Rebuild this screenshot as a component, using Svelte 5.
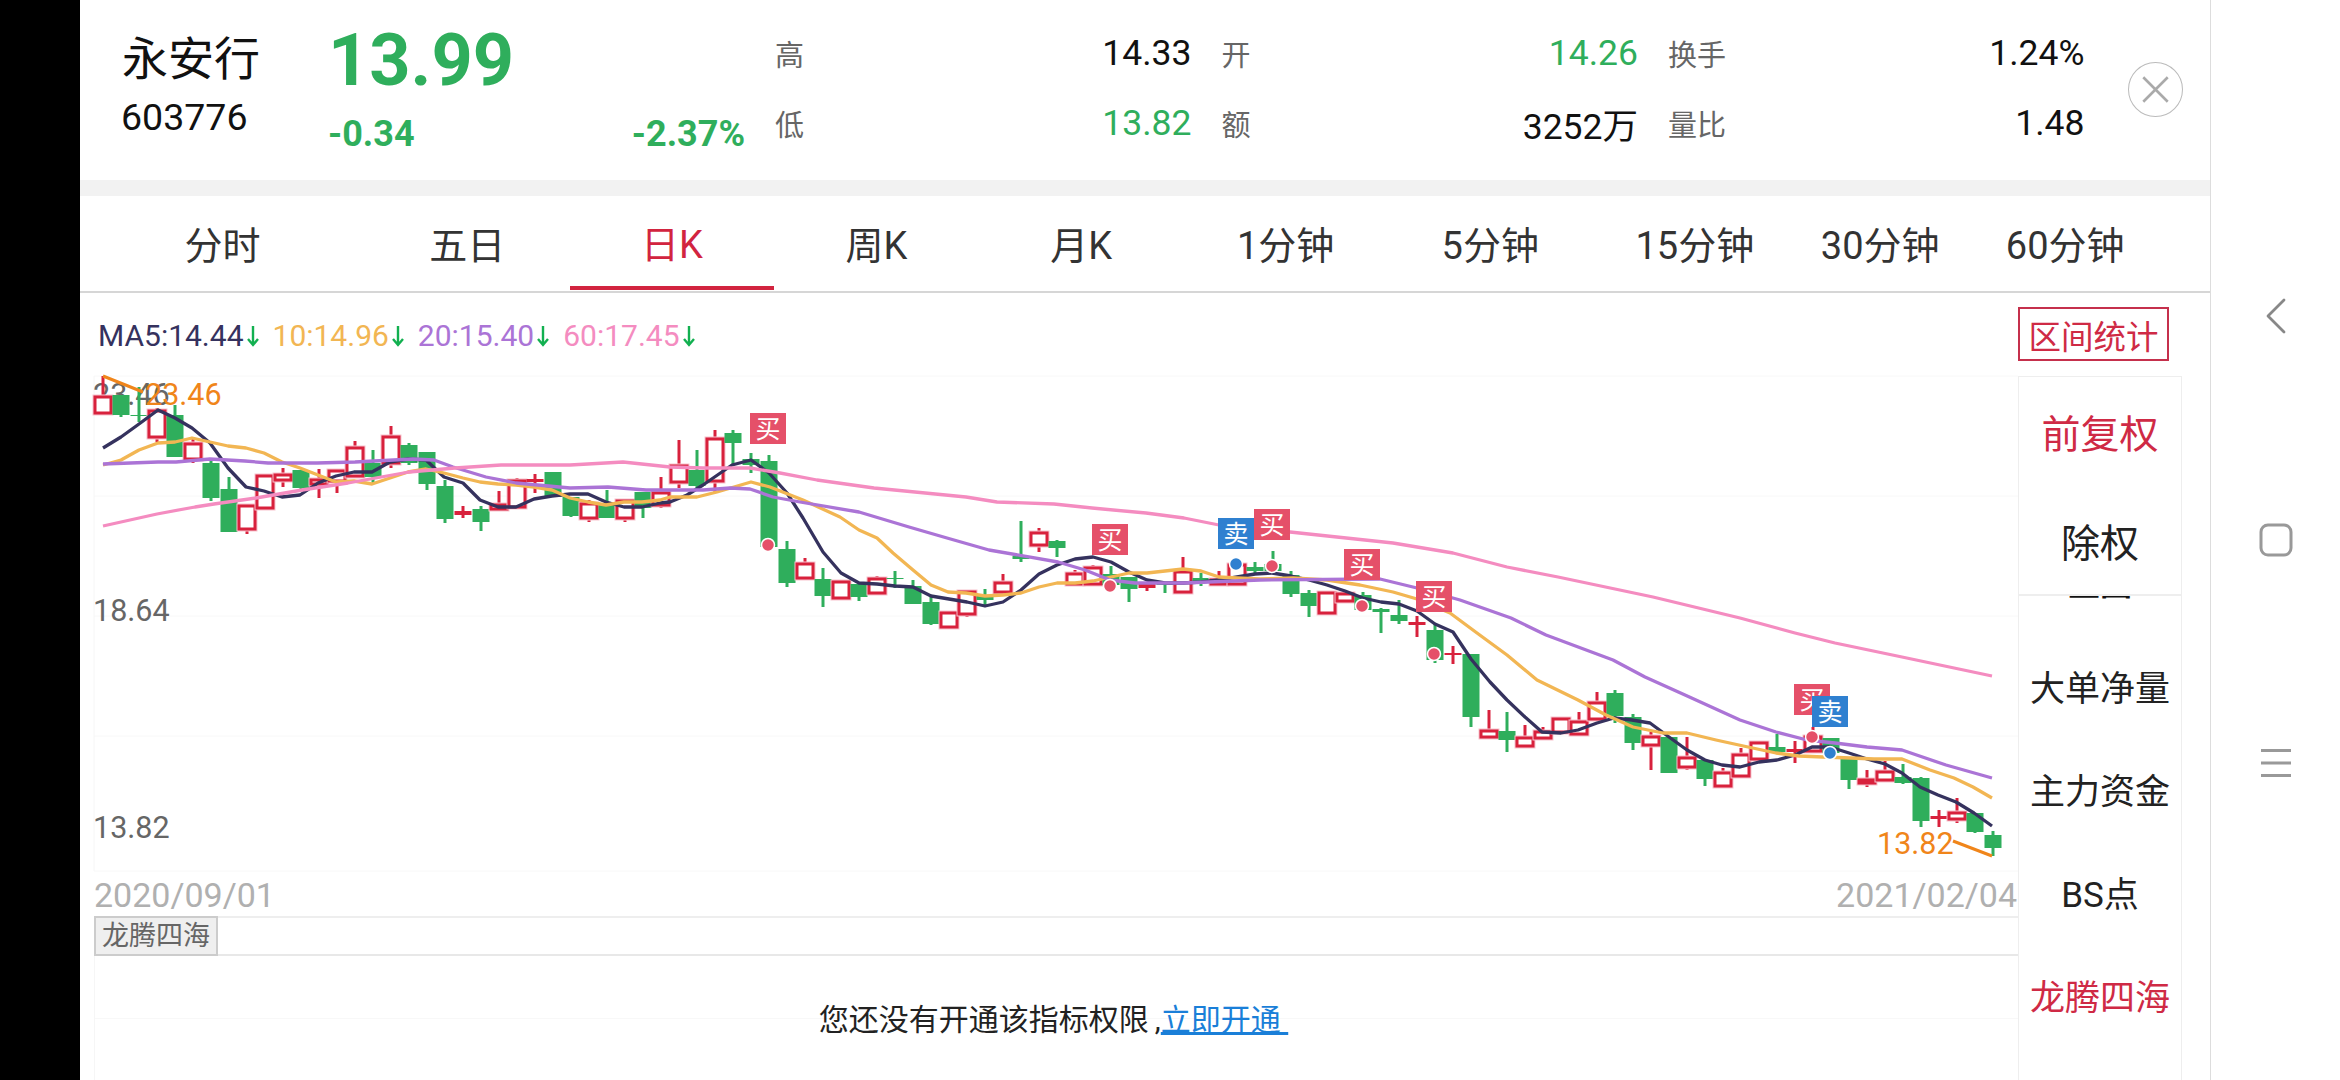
<script>
  const red = "#d8213c";
  const green = "#2fae5c";

  // type, body top, body bottom, high, low (page y of each day)
  const days = [
    ["r",397,413,376,413],["g",395,415,395,417],["g",415,416,387,422],["r",411,437,408,442],["g",415,457,405,457],
    ["r",444,459,437,463],["g",463,498,458,501],["g",489,532,477,532],["r",506,529,506,534],["r",476,508,474,508],
    ["r",475,480,468,487],["g",470,488,470,491],["r",480,484,469,498],["r",471,481,471,493],["r",448,476,441,476],
    ["g",463,477,450,483],["r",437,463,426,468],["g",445,463,443,465],["g",452,484,452,490],["g",486,519,480,523],
    ["s",511,515,506,518],["g",509,522,506,531],["r",505,509,491,510],["r",481,507,478,507],["s",479,482,474,493],
    ["g",472,497,472,497],["g",497,516,497,517],["r",504,518,500,522],["g",503,518,490,518],["r",501,518,499,522],
    ["g",492,508,492,518],["r",493,505,477,508],["r",466,482,440,488],["g",470,486,450,488],["r",439,481,430,492],
    ["g",433,443,430,465],["g",459,465,453,473],["g",461,547,455,547],["g",549,583,541,587],["r",564,578,558,578],
    ["g",579,596,568,607],["r",582,598,582,599],["g",584,597,584,601],["r",579,593,576,595],["g",578,579,571,588],
    ["g",586,604,580,604],["g",602,624,597,625],["r",613,627,613,627],["r",592,614,592,617],["g",596,600,589,607],
    ["r",583,592,574,595],["g",556,559,521,562],["r",533,545,528,552],["g",541,548,540,557],["r",574,584,570,584],
    ["r",568,584,565,585],["g",574,585,566,585],["g",577,589,577,602],["s",584,588,584,591],["g",582,585,582,593],
    ["r",572,592,557,592],["g",578,581,573,586],["r",580,584,571,585],["r",565,584,563,584],["g",567,571,562,575],
    ["g",564,571,551,571],["g",575,594,571,597],["g",593,606,590,617],["r",593,613,593,613],["r",594,601,594,603],
    ["g",595,610,592,610],["g",609,612,608,633],["g",615,621,600,624],["s",622,625,616,637],["g",630,660,624,663],
    ["s",653,655,646,664],["g",654,717,654,727],["r",731,737,710,737],["g",731,740,712,752],["r",738,746,725,746],
    ["r",732,738,727,740],["r",719,732,717,732],["r",722,734,712,734],["r",703,719,692,719],["g",693,716,690,723],
    ["g",717,743,714,750],["r",737,745,732,770],["g",737,773,737,773],["r",758,767,737,770],["g",760,779,760,786],
    ["r",773,786,768,787],["r",755,776,748,777],["r",743,759,741,759],["g",747,752,734,752],["s",749,752,741,763],
    ["r",737,751,727,751],["g",738,753,738,753],["g",758,780,758,789],["r",780,783,770,787],["r",772,780,761,782],
    ["g",777,783,764,784],["g",778,821,777,827],["s",816,819,810,827],["r",813,819,798,823],["g",813,832,813,833],
    ["g",835,848,831,856]
  ];

  const candles = days.map(([kind, top, bottom, high, low], i) => ({
    x: 103 + 18 * i, kind, top, bottom, high, low,
    color: kind === "g" ? green : red
  }));

  const ma5 = "103,448 121,437 139,424 158,410 175,418 192,428 210,443 228,468 246,487 264,491 282,497 300,495 318,483 336,476 354,472 372,472 390,462 408,459 426,460 444,477 463,483 480,500 498,507 516,507 534,499 552,496 570,494 588,494 606,502 624,507 642,507 660,503 670,502 687,495 703,485 732,465 751,460 769,473 787,493 803,518 823,552 841,573 859,583 877,584 895,586 913,587 931,596 949,599 967,602 985,606 1003,602 1021,590 1039,574 1057,565 1075,559 1093,557 1111,562 1129,572 1147,580 1165,583 1183,583 1201,582 1219,580 1237,577 1255,574 1272,573 1291,576 1309,580 1327,585 1345,591 1363,598 1381,602 1399,604 1417,611 1435,624 1453,632 1471,659 1490,682 1507,700 1525,717 1542,732 1561,733 1578,730 1597,723 1614,718 1632,720 1650,723 1669,737 1687,750 1705,760 1722,765 1740,767 1759,762 1777,760 1795,755 1812,747 1830,747 1849,753 1867,759 1885,764 1902,773 1920,787 1938,795 1956,802 1974,813 1992,826";
  const ma10 = "103,465 121,460 139,450 158,443 175,442 192,438 210,442 228,446 246,448 264,453 282,462 300,468 318,475 336,482 354,481 372,484 390,478 408,472 426,469 444,473 463,478 480,482 498,484 516,485 534,487 552,490 570,498 588,502 606,505 624,502 642,502 660,500 670,497 697,497 717,492 751,482 770,487 803,500 840,517 859,530 877,538 893,553 913,570 931,585 948,592 966,593 985,596 1003,595 1021,593 1039,587 1057,583 1075,583 1093,581 1111,577 1129,573 1147,573 1165,571 1183,569 1201,571 1219,577 1237,578 1260,579 1293,578 1327,580 1360,585 1393,592 1417,599 1450,613 1477,633 1507,655 1537,680 1578,700 1606,715 1633,727 1663,733 1687,733 1716,740 1748,747 1776,753 1799,756 1823,757 1851,758 1874,759 1902,759 1930,770 1954,778 1973,787 1992,798";
  const ma20 = "103,464 158,462 176,462 210,459 245,461 268,463 317,463 355,462 413,459 434,460 453,467 486,477 516,483 570,488 608,487 646,490 703,490 730,488 750,489 773,497 800,502 859,512 909,527 947,538 989,550 1058,562 1085,570 1110,580 1135,583 1183,583 1260,580 1380,579 1417,588 1460,600 1511,618 1546,635 1613,660 1645,677 1685,695 1740,720 1776,732 1807,740 1835,743 1867,747 1902,750 1946,765 1992,778";
  const ma60 = "103,526 157,514 195,507 214,504 256,498 302,490 348,483 409,472 455,468 501,465 570,465 623,462 670,467 703,468 750,468 780,473 817,480 874,488 966,497 997,502 1054,504 1092,508 1146,513 1184,518 1219,525 1290,532 1393,543 1453,553 1507,567 1558,577 1653,597 1740,618 1795,633 1835,643 1902,657 1992,676";

  const lines = [
    { points: ma5, color: "#35325e" },
    { points: ma10, color: "#f2b653" },
    { points: ma20, color: "#ab74d6" },
    { points: ma60, color: "#f48cc0" }
  ];

  const signals = [
    { x: 750, y: 413, text: "买" }, { x: 1092, y: 524, text: "买" }, { x: 1254, y: 509, text: "买" },
    { x: 1344, y: 549, text: "买" }, { x: 1416, y: 581, text: "买" }, { x: 1794, y: 684, text: "买" },
    { x: 1218, y: 518, text: "卖" }, { x: 1812, y: 696, text: "卖" }
  ];

  const dots = [
    { x: 768, y: 545, c: "#e55069" }, { x: 1110, y: 586, c: "#e55069" }, { x: 1272, y: 566, c: "#e55069" },
    { x: 1362, y: 606, c: "#e55069" }, { x: 1434, y: 654, c: "#e55069" }, { x: 1812, y: 737, c: "#e55069" },
    { x: 1236, y: 564, c: "#2f80d0" }, { x: 1830, y: 753, c: "#2f80d0" }
  ];

  const stats = [
    { label: "高", value: "14.33" },
    { label: "开", value: "14.26", up: true },
    { label: "换手", value: "1.24%" },
    { label: "低", value: "13.82", up: true },
    { label: "额", value: "3252万" },
    { label: "量比", value: "1.48" }
  ];

  const tabs = ["分时", "五日", "日K", "周K", "月K", "1分钟", "5分钟", "15分钟", "30分钟", "60分钟"];

  const legend = [
    { text: "MA5:14.44", color: "#35325e" },
    { text: "10:14.96", color: "#f2b653" },
    { text: "20:15.40", color: "#ab74d6" },
    { text: "60:17.45", color: "#f48cc0" }
  ];

  const lowerMenu = ["大单净量", "主力资金", "BS点", "龙腾四海"];
</script>

<div class="screen">
  <div class="bar"></div>

  <main>
    <header>
      <div class="name">
        <div class="title">永安行</div>
        <div class="code">603776</div>
      </div>
      <div class="price">
        <div class="last">13.99</div>
        <div class="change"><span>-0.34</span><span>-2.37%</span></div>
      </div>
      <div class="stats">
        {#each stats as s}
          <div class="stat">
            <span class="label">{s.label}</span>
            <span class="value" class:up={s.up}>{s.value}</span>
          </div>
        {/each}
      </div>
      <button class="close" aria-label="关闭">
        <svg width="55" height="55" viewBox="0 0 54 54">
          <circle cx="27" cy="27" r="26.5" fill="none" stroke="#bbb" stroke-width="1" />
          <path d="M15 15 L39 39 M39 15 L15 39" stroke="#aaa" stroke-width="2.6" fill="none" />
        </svg>
      </button>
    </header>

    <div class="band"></div>

    <nav class="tabs">
      {#each tabs as t, i}
        <div class="tab" class:active={i === 2}>{t}</div>
      {/each}
    </nav>

    <div class="body">
      <div class="chart">
        <div class="legend">
          {#each legend as l}
            <span class="ma" style="color: {l.color}">{l.text}</span>
            <svg class="arrow" width="12" height="24" viewBox="0 0 12 24">
              <path d="M6 2 V21 M1 15 L6 21 L11 15" fill="none" stroke="#12b050" stroke-width="2.4" />
            </svg>
          {/each}
        </div>

        <svg class="canvas" width="1938" height="540" viewBox="80 376 1938 540">
          {#each [376, 496, 616, 736, 871] as y}
            <line x1="94" x2="2018" y1={y} y2={y} stroke="#f8f8f8" stroke-width="1" />
          {/each}
          <line x1="94" x2="94" y1="376" y2="871" stroke="#f6f6f6" stroke-width="1" />

          <text class="axis" x="93" y="405">23.46</text>
          <text class="axis" x="93" y="621">18.64</text>
          <text class="axis" x="93" y="838">13.82</text>

          {#each candles as c}
            <line x1={c.x} x2={c.x} y1={c.high} y2={c.low} stroke={c.color} stroke-width="3" />
            {#if c.kind === "r"}
              <rect x={c.x - 8} y={c.top} width="16" height={c.bottom - c.top} fill="#fff" stroke="#f7c3ce" stroke-width="5" />
              <rect x={c.x - 8} y={c.top} width="16" height={c.bottom - c.top} fill="#fff" stroke={c.color} stroke-width="3" />
            {:else}
              <rect x={c.x - 8.5} y={c.top} width="17" height={c.bottom - c.top} fill={c.color} />
            {/if}
          {/each}

          {#each lines as l}
            <polyline points={l.points} fill="none" stroke={l.color} stroke-width="3.3" stroke-linejoin="round" />
          {/each}

          <polyline points="103,376 143,392" fill="none" stroke="#f0851a" stroke-width="3" />
          <polyline points="1953,841 1992,856" fill="none" stroke="#f0851a" stroke-width="3" />
          <text class="mark" x="145" y="405">23.46</text>
          <text class="mark" x="1877" y="854">13.82</text>

          {#each dots as d}
            <circle cx={d.x} cy={d.y} r="6.5" fill={d.c} stroke="#fff" stroke-width="1.5" />
          {/each}

          {#each signals as s}
            <rect x={s.x} y={s.y} width="36" height="31" fill={s.text === "买" ? "#e55069" : "#2f80d0"} />
            <text class="signal" x={s.x + 18} y={s.y + 25}>{s.text}</text>
          {/each}

          <text class="date" x="94" y="907">2020/09/01</text>
          <text class="date" x="2017" y="907" text-anchor="end">2021/02/04</text>
        </svg>

        <div class="indicator">
          <span class="indicator-name">龙腾四海</span>
        </div>

        <div class="locked">
          <span>您还没有开通该指标权限&#8201;,<span class="link">立即开通&nbsp;</span></span>
        </div>
      </div>

      <aside>
        <div class="range">区间统计</div>
        <div class="menu upper">
          <div class="item selected">前复权</div>
          <div class="item">除权</div>
        </div>
        <div class="menu lower">
          <div class="cut"><span>主图</span></div>
          {#each lowerMenu as m, i}
            <div class="item" class:selected={i === 3}>{m}</div>
          {/each}
        </div>
      </aside>
    </div>
  </main>

  <div class="system">
    <svg class="back" width="36" height="44" viewBox="0 0 36 44">
      <path d="M24 6 L8 22 L24 38" fill="none" stroke="#888" stroke-width="2.8" stroke-linecap="round" stroke-linejoin="round" />
    </svg>
    <svg width="36" height="36" viewBox="0 0 36 36">
      <rect x="3" y="3" width="30" height="30" rx="7" fill="none" stroke="#999" stroke-width="3" />
    </svg>
    <svg class="recent" width="36" height="30" viewBox="0 0 36 30">
      <path d="M3 2.5 H33 M3 15 H33 M3 27.5 H33" fill="none" stroke="#999" stroke-width="3" />
    </svg>
  </div>
</div>

<style>
  :global(body) {
    margin: 0;
    background: #fff;
  }

  .screen {
    display: flex;
    width: 2340px;
    height: 1080px;
    overflow: hidden;
    font-family: Roboto, "Noto Sans CJK SC", sans-serif;
    color: #111;
    background: #fff;
  }

  .bar {
    width: 80px;
    background: #000;
    flex: none;
  }

  main {
    width: 2130px;
    flex: none;
    border-right: 1px solid #ddd;
    display: flex;
    flex-direction: column;
  }

  header {
    height: 180px;
    display: flex;
    padding-left: 42px;
    flex: none;
  }

  .name {
    width: 206px;
    flex: none;
  }

  .title {
    font-size: 46px;
    line-height: 60px;
    margin-top: 29px;
  }

  .code {
    font-size: 37.5px;
    line-height: 44px;
    margin-top: 6px;
    margin-left: -1px;
  }

  .price {
    width: 417px;
    flex: none;
    color: #2fae5c;
    font-weight: 700;
  }

  .last {
    font-size: 72px;
    line-height: 84px;
    margin-top: 19px;
  }

  .change {
    display: flex;
    justify-content: space-between;
    font-size: 36px;
    line-height: 40px;
    margin-top: 11px;
  }

  .stats {
    margin-left: 30px;
    padding-top: 18px;
    width: 1309px;
    flex: none;
    display: grid;
    grid-template-columns: repeat(3, 416.5px);
    column-gap: 30px;
    grid-auto-rows: 70px;
    align-content: start;
  }

  .stat {
    display: flex;
    justify-content: space-between;
    align-items: center;
  }

  .label {
    font-size: 29px;
    color: #666;
  }

  .value {
    font-size: 35.5px;
    color: #111;
  }

  .value.up {
    color: #2fae5c;
  }

  .close {
    width: 55px;
    height: 55px;
    margin: 62px 0 0 44px;
    padding: 0;
    border: 0;
    background: none;
    flex: none;
  }

  .close svg {
    display: block;
  }

  .band {
    height: 16px;
    flex: none;
    background: #f2f2f2;
  }

  .tabs {
    height: 97px;
    flex: none;
    box-sizing: border-box;
    border-bottom: 2px solid #d6d6d6;
    display: grid;
    grid-template-columns: 285px repeat(7, 204.6px) 166px 204px;
  }

  .tab {
    font-size: 38px;
    color: #333;
    display: flex;
    align-items: center;
    justify-content: center;
    padding-bottom: 2px;
  }

  .tab.active {
    color: #d2243f;
    border-bottom: 4px solid #d2243f;
    padding-bottom: 0;
    margin-bottom: 1px;
  }

  .body {
    flex: 1;
    display: flex;
    min-height: 0;
  }

  .chart {
    width: 1938px;
    flex: none;
    display: flex;
    flex-direction: column;
  }

  .legend {
    height: 83px;
    box-sizing: border-box;
    flex: none;
    display: flex;
    align-items: center;
    padding: 2px 0 0 18px;
    font-size: 30px;
  }

  .arrow {
    margin: 0 14px 0 3px;
    flex: none;
  }

  .canvas {
    display: block;
    flex: none;
    overflow: visible;
  }

  .axis {
    font-size: 30.5px;
    fill: #666;
  }

  .mark {
    font-size: 30.5px;
    fill: #f0851a;
  }

  .date {
    font-size: 34px;
    fill: #b0b0b0;
  }

  .signal {
    font-size: 25px;
    fill: #fff;
    text-anchor: middle;
  }

  .indicator {
    height: 40px;
    flex: none;
    box-sizing: border-box;
    margin-left: 14px;
    border-top: 2px solid #eee;
    border-bottom: 2px solid #e8e8e8;
    display: flex;
  }

  .indicator-name {
    width: 124px;
    box-sizing: border-box;
    margin-top: -2px;
    margin-bottom: -2px;
    border: 2px solid #ccc;
    background: #efefef;
    color: #666;
    font-size: 27px;
    line-height: 36px;
    text-align: center;
  }

  .locked {
    flex: 1;
    min-height: 0;
    margin-left: 14px;
    border-left: 1px solid #f6f6f6;
    background: linear-gradient(#f8f8f8, #f8f8f8) 0 62px / 100% 1px no-repeat;
    display: flex;
    align-items: center;
    justify-content: center;
    font-size: 30px;
    color: #222;
    padding: 0 6px 2px 0;
  }

  .link {
    color: #1a7fd8;
    text-decoration: underline;
  }

  aside {
    flex: 1;
    display: flex;
    flex-direction: column;
    min-width: 0;
  }

  .range {
    width: 151px;
    height: 54px;
    box-sizing: border-box;
    margin-top: 14px;
    border: 2px solid #c5304c;
    color: #cf2a45;
    font-size: 32.5px;
    display: flex;
    align-items: center;
    justify-content: center;
    white-space: nowrap;
    flex: none;
  }

  .menu {
    width: 164px;
    box-sizing: border-box;
    border-left: 1px solid #eee;
    border-right: 1px solid #eee;
    flex: none;
  }

  .upper {
    margin-top: 15px;
    border-top: 1px solid #eee;
    height: 218px;
  }

  .upper .item {
    height: 108.5px;
    font-size: 39px;
  }

  .lower {
    flex: 1;
    border-top: 2px solid #eee;
  }

  .lower .item {
    height: 103px;
    font-size: 35px;
  }

  .item {
    display: flex;
    align-items: center;
    justify-content: center;
    white-space: nowrap;
    color: #222;
  }

  .item.selected {
    color: #cf2a45;
  }

  .cut {
    height: 3px;
    margin-bottom: 35px;
    overflow: hidden;
    display: flex;
    align-items: flex-end;
    justify-content: center;
    font-size: 32px;
    font-weight: 700;
    line-height: 0.86;
    color: #111;
  }

  .system {
    flex: 1;
    display: flex;
    flex-direction: column;
    align-items: center;
    padding-top: 294px;
    gap: 184px;
  }

  .system svg {
    display: block;
  }

  .back {
    margin-left: 4px;
  }

  .recent {
    margin-top: 6px;
  }
</style>
